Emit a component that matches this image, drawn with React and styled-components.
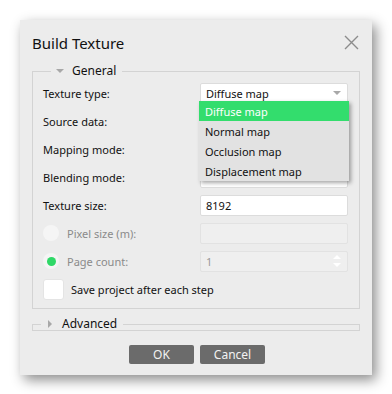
import React from "react"
import styled, { createGlobalStyle } from "styled-components"

const Global = createGlobalStyle`
  html, body {
    margin: 0;
    padding: 0;
    background: #ffffff;
  }
  body {
    font-family: "Noto Sans", "Open Sans", sans-serif;
    font-size: 11px;
    color: #111;
  }
`

const Page = styled.div`
  width: 392px;
  height: 394px;
  padding: 20px 0 0 20px;
  box-sizing: border-box;
`

const Dialog = styled.div`
  width: 352px;
  height: 355px;
  background: #ececec;
  box-shadow: 4px 5px 12px rgba(0, 0, 0, 0.45);
  box-sizing: border-box;
  padding: 0 12px 0 12px;
  display: flex;
  flex-direction: column;
`

const TitleBar = styled.div`
  height: 45px;
  display: flex;
  align-items: center;
  justify-content: space-between;
`

const Title = styled.h1`
  margin: 0;
  font-size: 15px;
  font-weight: normal;
  color: #111;
`

const Close = styled.button`
  border: 0;
  background: none;
  padding: 0;
  margin-right: 1px;
  width: 16px;
  height: 16px;
  display: flex;
  align-items: center;
  justify-content: center;
`

const Group = styled.fieldset`
  margin: 0;
  border: 1px solid #d3d3d3;
  padding: ${(p) => (p.$collapsed ? "0" : "2px 10px 5px 10px")};
  height: ${(p) => (p.$collapsed ? "9px" : "auto")};
  box-sizing: border-box;
  min-width: 0;
`

const Legend = styled.legend`
  margin-left: 8px;
  padding: 0 6px 0 5px;
  display: flex;
  align-items: center;
  gap: 8px;
  font-size: 12px;
  line-height: 12px;
  color: #111;
`

const Rows = styled.div`
  display: flex;
  flex-direction: column;
`

const Row = styled.div`
  height: 28px;
  display: grid;
  grid-template-columns: 157px 148px;
  align-items: center;
  position: relative;
`

const Label = styled.label`
  display: flex;
  align-items: center;
  gap: 8px;
  color: ${(p) => (p.$disabled ? "#8a8a8a" : "#111")};
`

const Radio = styled.span`
  width: 16px;
  height: 16px;
  border-radius: 50%;
  background: #f5f5f5;
  display: flex;
  align-items: center;
  justify-content: center;

  &::after {
    content: "";
    width: 9px;
    height: 9px;
    border-radius: 50%;
    background: ${(p) => (p.$checked ? "#2fd867" : "transparent")};
  }
`

const Field = styled.div`
  height: 21px;
  box-sizing: border-box;
  border: 1px solid ${(p) => (p.$disabled ? "#e2e2e2" : "#dcdcdc")};
  background: ${(p) => (p.$disabled ? "#efefef" : "#ffffff")};
  border-radius: 2px;
  display: flex;
  align-items: center;
  justify-content: space-between;
  padding: 0 6px 0 5px;
  color: ${(p) => (p.$disabled ? "#9a9a9a" : "#111")};
`

const Popup = styled.ul`
  position: absolute;
  left: 156px;
  top: 22px;
  width: 150px;
  margin: 0;
  padding: 0;
  list-style: none;
  background: #e2e2e2;
  box-shadow: 2px 2px 4px rgba(0, 0, 0, 0.35);
  z-index: 2;
`

const Item = styled.li`
  height: 20px;
  display: flex;
  align-items: center;
  padding-left: 6px;
  background: ${(p) => (p.$active ? "#33dd6d" : "transparent")};
  color: ${(p) => (p.$active ? "#ffffff" : "#111")};
`

const CheckRow = styled.label`
  height: 28px;
  display: flex;
  align-items: center;
  gap: 7px;
`

const Box = styled.span`
  width: 21px;
  height: 21px;
  background: #fff;
  border-radius: 3px;
  border: 1px solid #e4e4e4;
  box-sizing: border-box;
`

const Gap = styled.div`
  height: ${(p) => p.$h}px;
`

const Buttons = styled.div`
  display: flex;
  justify-content: center;
  gap: 6px;
  padding-left: 2px;
`

const Button = styled.button`
  width: 65px;
  height: 19px;
  border: 0;
  border-radius: 2px;
  background: #6b6b6b;
  color: #f2f2f2;
  font-family: inherit;
  font-size: 12px;
  padding: 0;
`

const Caret = ({ dir = "down", color = "#a8a8a8" }) => (
  <svg width="8" height="8" viewBox="0 0 8 8">
    {dir === "down" ? (
      <path d="M0 2 L8 2 L4 6 Z" fill={color} />
    ) : (
      <path d="M2 0 L6 4 L2 8 Z" fill={color} />
    )}
  </svg>
)

const Spinner = () => (
  <svg width="8" height="14" viewBox="0 0 8 14">
    <path d="M0 5 L8 5 L4 1 Z" fill="#ffffff" />
    <path d="M0 9 L8 9 L4 13 Z" fill="#ffffff" />
  </svg>
)

export default function App() {
  return (
    <Page>
      <Global />
      <Dialog>
        <TitleBar>
          <Title>Build Texture</Title>
          <Close aria-label="Close">
            <svg width="15" height="15" viewBox="0 0 15 15">
              <path d="M1 1 L14 14 M14 1 L1 14" stroke="#8c8c8c" strokeWidth="1.4" />
            </svg>
          </Close>
        </TitleBar>
        <Group>
          <Legend>
            <Caret />
            General
          </Legend>
          <Rows>
            <Row>
              <Label>Texture type:</Label>
              <Field>
                Diffuse map
                <Caret />
              </Field>
              <Popup>
                <Item $active>Diffuse map</Item>
                <Item>Normal map</Item>
                <Item>Occlusion map</Item>
                <Item>Displacement map</Item>
              </Popup>
            </Row>
            <Row>
              <Label>Source data:</Label>
              <Field />
            </Row>
            <Row>
              <Label>Mapping mode:</Label>
              <Field />
            </Row>
            <Row>
              <Label>Blending mode:</Label>
              <Field />
            </Row>
            <Row>
              <Label>Texture size:</Label>
              <Field>8192</Field>
            </Row>
            <Row>
              <Label $disabled>
                <Radio />
                Pixel size (m):
              </Label>
              <Field $disabled />
            </Row>
            <Row>
              <Label $disabled>
                <Radio $checked />
                Page count:
              </Label>
              <Field $disabled>
                1
                <Spinner />
              </Field>
            </Row>
            <CheckRow>
              <Box />
              Save project after each step
            </CheckRow>
          </Rows>
        </Group>
        <Gap $h={9} />
        <Group $collapsed>
          <Legend>
            <Caret dir="right" />
            Advanced
          </Legend>
        </Group>
        <Gap $h={18} />
        <Buttons>
          <Button>OK</Button>
          <Button>Cancel</Button>
        </Buttons>
      </Dialog>
    </Page>
  )
}
